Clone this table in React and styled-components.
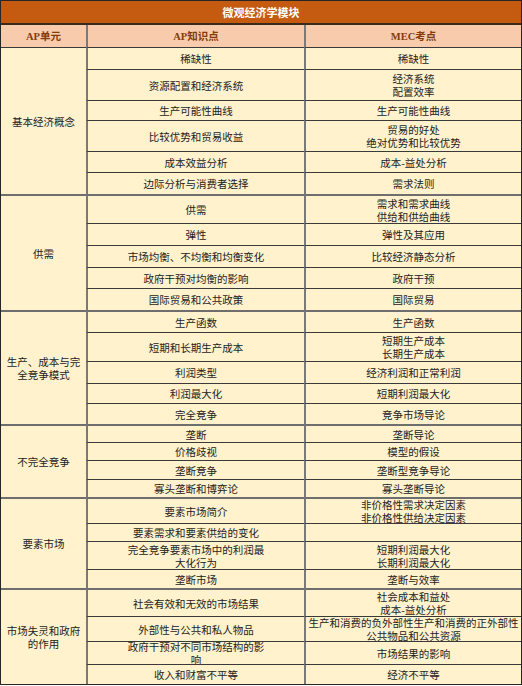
import React from "react";
import styled, { createGlobalStyle } from "styled-components";

const Global = createGlobalStyle`
  html, body { margin: 0; padding: 0; background: #ffffff; }
  body { font-family: "Noto Sans CJK SC", "Noto Sans", sans-serif; }
  * { box-sizing: border-box; }
`;

const Sheet = styled.div`
  width: 522px;
  display: grid;
  grid-template-columns: 85px 218px 217px;
  grid-template-rows: ${(p) => p.$rows};
  border: 1px solid #262626;
  font-family: "Noto Sans CJK SC", "Noto Sans", sans-serif;
  font-size: 10.5px;
  line-height: 13px;
  color: #222222;
`;

const Title = styled.div`
  grid-column: 1 / -1;
  display: flex;
  align-items: center;
  justify-content: center;
  background: #c55a11;
  color: #ffffff;
  font-family: "Noto Sans CJK SC", serif;
  font-weight: 700;
  font-size: 11px;
  border-bottom: 2px solid #3a2a1e;
`;

const Head = styled.div`
  display: flex;
  align-items: center;
  justify-content: center;
  background: #f8cbad;
  color: #843c0c;
  font-family: "Liberation Serif", "Noto Sans CJK SC", serif;
  font-weight: 700;
  font-size: 10.5px;
  border-left: ${(p) => (p.$first ? "none" : "2px solid #7a7a7a")};
  border-bottom: 1px solid #3a3a3a;
`;

const Unit = styled.div`
  grid-row: span ${(p) => p.$span};
  display: flex;
  align-items: center;
  justify-content: center;
  padding: 0 4px;
  background: #fff2cc;
  text-align: center;
  white-space: pre-line;
  border-top: ${(p) => (p.$first ? "none" : "2px solid #6e6e6e")};
`;

const Cell = styled.div`
  display: flex;
  align-items: center;
  justify-content: center;
  padding: 0 2px;
  background: #fff2cc;
  text-align: center;
  white-space: pre-line;
  border-left: 2px solid #7a7a7a;
  border-top: ${(p) =>
    p.$top ? "none" : p.$first ? "2px solid #6e6e6e" : "1px solid #3a3a3a"};
`;

const sections = [
  {
    unit: "基本经济概念",
    rows: [
      ["稀缺性", "稀缺性", 21],
      ["资源配置和经济系统", "经济系统\n配置效率", 31],
      ["生产可能性曲线", "生产可能性曲线", 20],
      ["比较优势和贸易收益", "贸易的好处\n绝对优势和比较优势", 31],
      ["成本效益分析", "成本-益处分析", 21],
      ["边际分析与消费者选择", "需求法则", 22],
    ],
  },
  {
    unit: "供需",
    rows: [
      ["供需", "需求和需求曲线\n供给和供给曲线", 29],
      ["弹性", "弹性及其应用", 22],
      ["市场均衡、不均衡和均衡变化", "比较经济静态分析", 22],
      ["政府干预对均衡的影响", "政府干预", 21],
      ["国际贸易和公共政策", "国际贸易", 22],
    ],
  },
  {
    unit: "生产、成本与完\n全竞争模式",
    rows: [
      ["生产函数", "生产函数", 22],
      ["短期和长期生产成本", "短期生产成本\n长期生产成本", 29],
      ["利润类型", "经济利润和正常利润", 22],
      ["利润最大化", "短期利润最大化", 20],
      ["完全竞争", "竞争市场导论", 21],
    ],
  },
  {
    unit: "不完全竞争",
    rows: [
      ["垄断", "垄断导论", 18],
      ["价格歧视", "模型的假设", 18],
      ["垄断竞争", "垄断型竞争导论", 19],
      ["寡头垄断和博弈论", "寡头垄断导论", 18],
    ],
  },
  {
    unit: "要素市场",
    rows: [
      ["要素市场简介", "非价格性需求决定因素\n非价格性供给决定因素", 26],
      ["要素需求和要素供给的变化", "", 18],
      ["完全竞争要素市场中的利润最\n大化行为", "短期利润最大化\n长期利润最大化", 28],
      ["垄断市场", "垄断与效率", 19],
    ],
  },
  {
    unit: "市场失灵和政府\n的作用",
    rows: [
      ["社会有效和无效的市场结果", "社会成本和益处\n成本-益处分析", 28],
      ["外部性与公共和私人物品", "生产和消费的负外部性生产和消费的正外部性\n公共物品和公共资源", 25],
      ["政府干预对不同市场结构的影\n响", "市场结果的影响", 23],
      ["收入和财富不平等", "经济不平等", 20],
    ],
  },
];

const rowTracks = [
  "24px",
  "23px",
  ...sections.flatMap((s) => s.rows.map((r) => `${r[2]}px`)),
].join(" ");

export default function App() {
  return (
    <>
      <Global />
      <Sheet $rows={rowTracks}>
        <Title>微观经济学模块</Title>
        <Head $first>AP单元</Head>
        <Head>AP知识点</Head>
        <Head>MEC考点</Head>
        {sections.map((s, si) => (
          <React.Fragment key={si}>
            <Unit $span={s.rows.length} $first={si === 0}>
              {s.unit}
            </Unit>
            {s.rows.map((r, ri) => (
              <React.Fragment key={ri}>
                <Cell $first={ri === 0} $top={si === 0 && ri === 0}>
                  {r[0]}
                </Cell>
                <Cell $first={ri === 0} $top={si === 0 && ri === 0}>
                  {r[1]}
                </Cell>
              </React.Fragment>
            ))}
          </React.Fragment>
        ))}
      </Sheet>
    </>
  );
}
